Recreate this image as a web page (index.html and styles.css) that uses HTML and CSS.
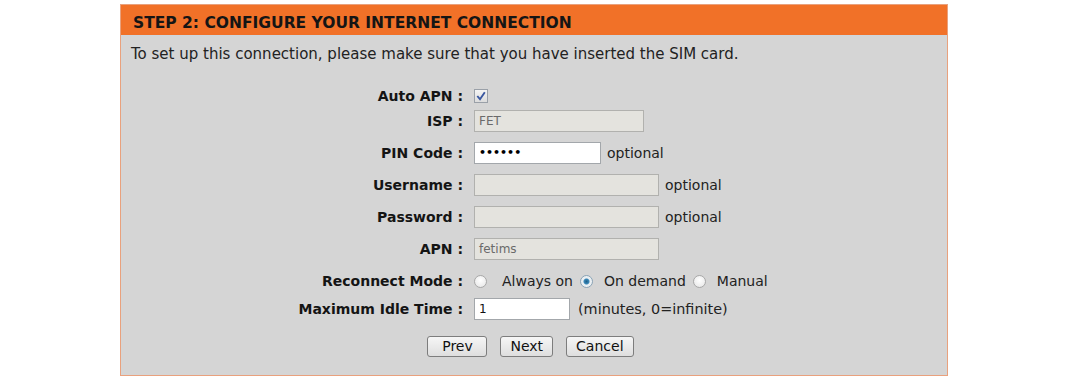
FILE: index.html
```html
<!DOCTYPE html>
<html>
<head>
<meta charset="utf-8">
<link rel="stylesheet" href="styles.css">
</head>
<body>
<div class="panel">
  <div class="panel-head">STEP 2: CONFIGURE YOUR INTERNET CONNECTION</div>
  <div class="panel-body">
    <p class="intro">To set up this connection, please make sure that you have inserted the SIM card.</p>
    <div class="form">
      <div class="row row-check">
        <span class="label">Auto APN :</span>
        <span class="field"><span class="check"><svg width="12" height="12" viewBox="0 0 12 12"><path d="M2.3 6 L5 9.2 L9.8 2.3" fill="none" stroke="#3a57a0" stroke-width="1.9"/></svg></span></span>
      </div>
      <div class="row">
        <span class="label">ISP :</span>
        <span class="field"><span class="input disabled w-isp">FET</span></span>
      </div>
      <div class="row">
        <span class="label">PIN Code :</span>
        <span class="field"><span class="input w-pin pw">&bull;&bull;&bull;&bull;&bull;&bull;</span><span class="note">optional</span></span>
      </div>
      <div class="row">
        <span class="label">Username :</span>
        <span class="field"><span class="input disabled w-long"></span><span class="note">optional</span></span>
      </div>
      <div class="row">
        <span class="label">Password :</span>
        <span class="field"><span class="input disabled w-long"></span><span class="note">optional</span></span>
      </div>
      <div class="row">
        <span class="label">APN :</span>
        <span class="field"><span class="input disabled w-long">fetims</span></span>
      </div>
      <div class="row row-radio">
        <span class="label">Reconnect Mode :</span>
        <span class="field">
          <span class="radio"></span><span class="opt opt-first">Always on</span>
          <span class="radio on"></span><span class="opt">On demand</span>
          <span class="radio"></span><span class="opt">Manual</span>
        </span>
      </div>
      <div class="row row-idle">
        <span class="label">Maximum Idle Time :</span>
        <span class="field"><span class="input w-idle">1</span><span class="note note-wide">(minutes, 0=infinite)</span></span>
      </div>
    </div>
    <div class="buttons">
      <span class="btn btn-prev">Prev</span>
      <span class="btn">Next</span>
      <span class="btn">Cancel</span>
    </div>
  </div>
</div>
</body>
</html>
```
FILE: styles.css
```css
html, body {
  margin: 0;
  padding: 0;
  background: #ffffff;
}
body {
  font-family: "DejaVu Sans", Tahoma, sans-serif;
  color: #1a1a1a;
  padding: 4px 0 0 120px;
}
.panel {
  width: 826px;
  height: 370px;
  border: 1px solid #e9a17d;
  background: #d5d5d5;
  display: flex;
  flex-direction: column;
}
.panel-head {
  box-sizing: border-box;
  background: #f17128;
  height: 30px;
  padding: 9px 0 0 12px;
  line-height: 18px;
  font-weight: bold;
  font-size: 15.5px;
  color: #151515;
}
.panel-body {
  border-top: 1px solid #cfd6dc;
  flex: 1;
}
.intro {
  margin: 9px 0 0 10px;
  font-size: 15px;
  line-height: 18px;
  color: #222;
}
.form {
  margin-top: 26px;
  display: flex;
  flex-direction: column;
  gap: 10px;
}
.row {
  display: flex;
  align-items: center;
  height: 22px;
}
.row-check {
  height: 14px;
  margin-bottom: -3px;
}
.row-idle {
  margin-top: -4px;
}
.label {
  width: 342px;
  text-align: right;
  font-weight: bold;
  font-size: 14px;
  color: #141414;
  flex: none;
}
.field {
  display: flex;
  align-items: center;
  margin-left: 11px;
  font-size: 14px;
}
.input {
  box-sizing: border-box;
  height: 22px;
  border: 1px solid #a3a7ab;
  background: #ffffff;
  font-family: Tahoma, "DejaVu Sans", sans-serif;
  font-size: 12px;
  line-height: 20px;
  padding-left: 4px;
  color: #111;
}
.input.disabled {
  background: #e4e3de;
  border-color: #b1b1ae;
  color: #6a6a6a;
}
.pw {
  font-size: 11px;
  font-weight: bold;
  color: #000;
}
.w-isp { width: 170px; }
.w-pin { width: 127px; }
.w-long { width: 185px; }
.w-idle { width: 96px; }
.note {
  margin-left: 6px;
  color: #222;
}
.note-wide {
  margin-left: 8px;
  font-size: 14.4px;
}
.check {
  box-sizing: border-box;
  width: 14px;
  height: 14px;
  border: 1px solid #9aa0a8;
  background: linear-gradient(#f4f4f4, #dcdcdc);
  display: flex;
  align-items: center;
  justify-content: center;
}
.radio {
  box-sizing: border-box;
  width: 13px;
  height: 13px;
  border-radius: 50%;
  border: 1px solid #a8a8a8;
  background: radial-gradient(circle at 50% 40%, #ffffff, #e4e4e4);
  flex: none;
}
.radio.on {
  background: radial-gradient(circle, #1b5f8a 0, #3b88b8 2.5px, #e8eef2 3.5px, #f2f2f2 100%);
  border-color: #8aa3b6;
}
.opt {
  margin: 0 7px 0 11px;
  color: #222;
}
.opt-first {
  margin-left: 15px;
}
.buttons {
  display: flex;
  justify-content: center;
  gap: 13px;
  margin-top: 16px;
  padding-right: 7px;
}
.btn {
  box-sizing: border-box;
  height: 21px;
  line-height: 19px;
  padding: 0 9px;
  border: 1px solid #7d7d7d;
  border-radius: 3px;
  background: linear-gradient(#f6f6f6, #dedede);
  font-size: 14px;
  color: #111;
  text-align: center;
}
.btn-prev {
  min-width: 60px;
}
```
